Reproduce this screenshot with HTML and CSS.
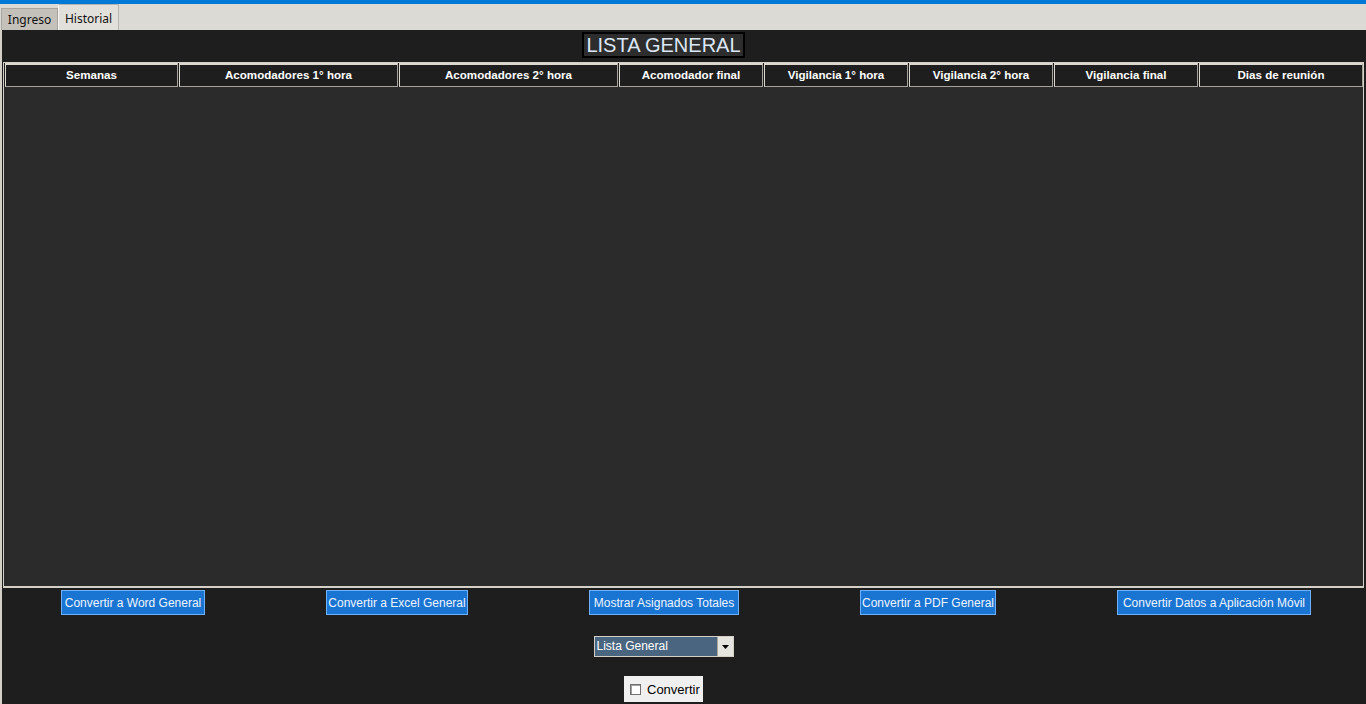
FILE: index.html
```html
<!DOCTYPE html>
<html lang="es">
<head>
<meta charset="utf-8">
<title>Historial</title>
<link rel="stylesheet" href="styles.css">
</head>
<body>
<div class="topbar"></div>
<div class="tabs">
  <div class="tab">Ingreso</div>
  <div class="tab active">Historial</div>
</div>
<div class="panel">
  <div class="title-row"><div class="title">LISTA GENERAL</div></div>
  <div class="table">
    <div class="thead">
      <div class="th w1">Semanas</div>
      <div class="th w2">Acomodadores 1° hora</div>
      <div class="th w2">Acomodadores 2° hora</div>
      <div class="th w3">Acomodador final</div>
      <div class="th w3">Vigilancia 1° hora</div>
      <div class="th w3">Vigilancia 2° hora</div>
      <div class="th w3">Vigilancia final</div>
      <div class="th w4">Dias de reunión</div>
    </div>
    <div class="tbody"></div>
  </div>
  <div class="buttons">
    <button class="btn b-word">Convertir a Word General</button>
    <button class="btn b-excel">Convertir a Excel General</button>
    <button class="btn b-show">Mostrar Asignados Totales</button>
    <button class="btn b-pdf">Convertir a PDF General</button>
    <button class="btn b-app">Convertir Datos a Aplicación Móvil</button>
  </div>
  <div class="combo-row">
    <div class="combo">
      <span class="combo-text">Lista General</span>
      <span class="combo-arrow"><svg width="7" height="4" viewBox="0 0 7 4"><path d="M0 0h7L3.5 4z" fill="#000"/></svg></span>
    </div>
  </div>
  <div class="check-row">
    <label class="check"><span class="box"></span>Convertir</label>
  </div>
</div>
</body>
</html>
```

FILE: styles.css
```css
html, body {
  margin: 0;
  padding: 0;
  height: 704px;
  overflow: hidden;
  background: #dcdad5;
  font-family: "Liberation Sans", Arial, sans-serif;
  font-size: 12px;
}
.topbar {
  height: 4px;
  background: #0078d7;
}
.tabs {
  height: 26px;
  display: flex;
  align-items: flex-end;
  padding-left: 1px;
  background: #dcdad5;
}
.tab {
  height: 22px;
  box-sizing: border-box;
  padding: 0 6px;
  display: flex;
  align-items: center;
  justify-content: center;
  width: 57px;
  background: #c4c1ba;
  border: 1px solid #a8a59e;
  border-bottom: none;
  color: #111;
  font-family: "Noto Sans", "Liberation Sans", sans-serif;
  font-size: 12px;
}
.tab.active {
  height: 26px;
  width: 61px;
  background: #e2e0db;
  border-color: #b8b5ae;
  border-left-color: #f4f3f0;
  padding-top: 2px;
}
.panel {
  height: 674px;
  box-sizing: border-box;
  background: #1e1e1e;
  border-left: 2px solid #d4d0c8;
  padding: 0 2px 0 1px;
  display: flex;
  flex-direction: column;
}
.title-row {
  height: 32px;
  display: flex;
  justify-content: center;
  align-items: flex-start;
  padding-top: 2px;
  padding-right: 40px;
  box-sizing: border-box;
}
.title {
  height: 26px;
  box-sizing: border-box;
  border: 2px solid #000;
  background: #2d2d2d;
  color: #dde8f6;
  font-family: "Liberation Sans", Arial, sans-serif;
  font-size: 20px;
  line-height: 22px;
  padding: 0 2px;
}
.table {
  height: 526px;
  box-sizing: border-box;
  border: 1px solid #d4d0c8;
  border-bottom-width: 2px;
  background: #2b2b2b;
  display: flex;
  flex-direction: column;
}
.thead {
  display: flex;
  height: 24px;
  background: #1e1e1e;
}
.th {
  box-sizing: border-box;
  height: 24px;
  border: 1px solid #dcd8d0;
  border-top-width: 2px;
  border-right-color: #a6a39c;
  border-bottom-color: #a6a39c;
  margin-right: 1px;
  background: #1e1e1e;
  color: #fff;
  font-weight: bold;
  font-size: 11.6px;
  padding-bottom: 2px;
  display: flex;
  align-items: center;
  justify-content: center;
  flex: none;
}
.w1 { width: 173px; margin-left: 1px; }
.w2 { width: 219px; }
.w3 { width: 144px; }
.w4 { flex: 1; margin-right: 0; }
.tbody {
  flex: 1;
  background: #2b2b2b;
}
.buttons {
  display: flex;
  gap: 121px;
  padding-left: 58px;
  padding-top: 2px;
  height: 26px;
  align-items: flex-start;
}
.btn {
  height: 25px;
  box-sizing: border-box;
  background: #1a74d2;
  border: 1px solid #6fb0ff;
  color: #eef4ff;
  font-family: "Liberation Sans", Arial, sans-serif;
  font-size: 12px;
  padding: 0;
  margin: 0;
  flex: none;
  white-space: nowrap;
}
.b-word { width: 144px; }
.b-excel { width: 142px; }
.b-show { width: 150px; }
.b-pdf { width: 136px; }
.b-app { width: 194px; }
.combo-row {
  display: flex;
  justify-content: center;
  padding-top: 20px;
  padding-right: 40px;
}
.combo {
  width: 140px;
  height: 21px;
  box-sizing: border-box;
  border: 1px solid #d4d0c8;
  background: #4a6580;
  display: flex;
}
.combo-text {
  flex: 1;
  color: #fff;
  padding-left: 2px;
  line-height: 19px;
  font-size: 12px;
}
.combo-arrow {
  width: 15px;
  background: #e6e4df;
  border-left: 1px solid #a8a59e;
  display: flex;
  align-items: center;
  justify-content: center;
}
.check-row {
  display: flex;
  justify-content: center;
  padding-top: 19px;
  padding-right: 40px;
}
.check {
  width: 79px;
  height: 26px;
  box-sizing: border-box;
  background: #f0f0f0;
  display: flex;
  align-items: center;
  gap: 6px;
  padding-left: 6px;
  color: #000;
  font-family: "Liberation Sans", Arial, sans-serif;
  font-size: 13px;
}
.box {
  width: 11px;
  height: 11px;
  box-sizing: border-box;
  border: 1px solid #707070;
  background: #fff;
  box-shadow: inset 1px 1px 0 #a0a0a0;
}
```
